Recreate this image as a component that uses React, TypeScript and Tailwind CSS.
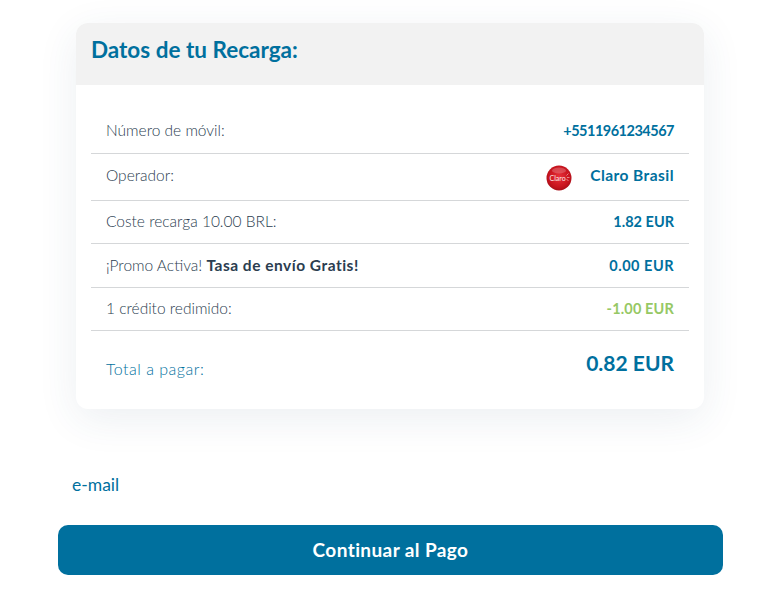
import type React from "react"

type Row = {
  label: React.ReactNode
  value: string
  valueClass: string
  height: string
  logo?: boolean
}

const rows: Row[] = [
  { label: "Número de móvil:", value: "+5511961234567", valueClass: "text-[14.5px] tracking-[-0.5px] text-[#00709e]", height: "h-[45px]" },
  { label: "Operador:", value: "Claro Brasil", valueClass: "text-[15.5px] tracking-[0.45px] text-[#00709e]", height: "h-[47px] pb-[2px]", logo: true },
  { label: "Coste recarga 10.00 BRL:", value: "1.82 EUR", valueClass: "text-[14.5px] text-[#00709e]", height: "h-[43px]" },
  {
    label: (
      <>
        ¡Promo Activa! <b className="text-[15.5px] font-bold tracking-[0.5px] text-[#2b3d50]">Tasa de envío Gratis!</b>
      </>
    ),
    value: "0.00 EUR",
    valueClass: "text-[14.5px] tracking-[0.5px] text-[#00709e]",
    height: "h-[44px]",
  },
  { label: "1 crédito redimido:", value: "-1.00 EUR", valueClass: "text-[14.5px] tracking-[0.15px] text-[#96c864]", height: "h-[43px]" },
]

function ClaroLogo() {
  return (
    <svg width="26" height="26" viewBox="0 0 26 26" className="mr-[18px] mt-[4px]">
      <defs>
        <radialGradient id="claro" cx="50%" cy="45%" r="55%">
          <stop offset="0%" stopColor="#e8303a" />
          <stop offset="75%" stopColor="#c8141e" />
          <stop offset="100%" stopColor="#a80e18" />
        </radialGradient>
      </defs>
      <circle cx="13" cy="13" r="12.5" fill="url(#claro)" />
      <ellipse cx="13" cy="5.5" rx="7" ry="3" fill="#ffffff" opacity="0.2" />
      <text x="3.5" y="15.5" fontSize="7" fontFamily="Lato, sans-serif" fill="#ffffff" opacity="0.9">
        Claro
      </text>
      <path d="M20.5 10.5l2-2M21 12.5h2.5M20.5 14.5l2 1" stroke="#ffffff" strokeWidth="0.6" opacity="0.8" />
    </svg>
  )
}

export default function App() {
  return (
    <div className="h-[611px] w-[768px] overflow-hidden bg-white pt-[23px] font-['Lato',sans-serif]">
      {/* Tarjeta de datos */}
      <div className="mx-[76px] h-[386px] w-[628px] overflow-hidden rounded-[12px] bg-white shadow-[0_10px_40px_rgba(40,80,110,0.09)]">
        <div className="flex h-[62px] items-center bg-[#f2f2f2] px-[15px] pb-[9px]">
          <h2 className="text-[22.5px] font-bold text-[#00709e]">Datos de tu Recarga:</h2>
        </div>

        <div className="mx-[15px] mt-[24px]">
          {rows.map((row) => (
            <div
              key={row.value}
              className={`flex items-center justify-between border-b border-[#d5d7d9] px-[15px] ${row.height}`}
            >
              <span className="text-[15.5px] font-light text-[#2b3d50]">{row.label}</span>
              <span className="flex items-center">
                {row.logo && <ClaroLogo />}
                <span className={`font-bold ${row.valueClass}`}>{row.value}</span>
              </span>
            </div>
          ))}

          <div className="flex h-[66px] items-center justify-between px-[15px]">
            <span className="mt-[10px] text-[16px] font-light tracking-[0.5px] text-[#00709e]">Total a pagar:</span>
            <span className="mb-[2px] text-[21px] font-bold text-[#00709e]">0.82 EUR</span>
          </div>
        </div>
      </div>

      <div className="ml-[72px] mt-[66px] text-[17.5px] leading-[20px] text-[#00709e]">e-mail</div>

      <button className="ml-[58px] mt-[30px] h-[50px] w-[665px] rounded-[10px] bg-[#00709e] text-[19px] font-bold tracking-[0.4px] text-white">
        Continuar al Pago
      </button>
    </div>
  )
}
